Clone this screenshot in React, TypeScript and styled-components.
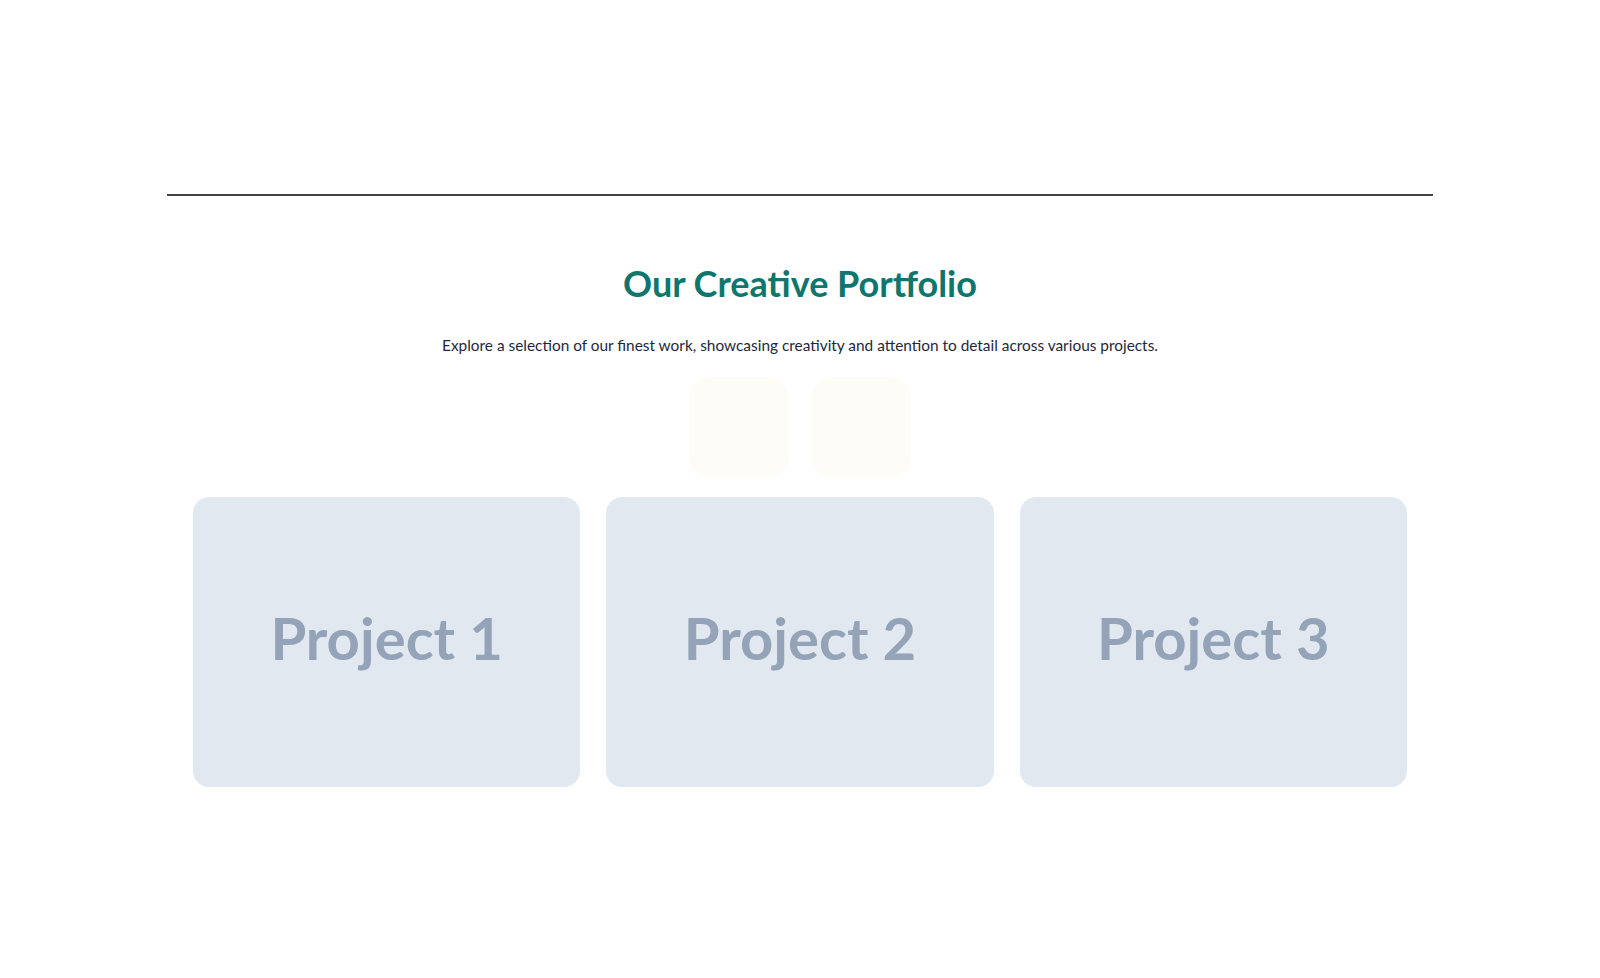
import React from "react";
import styled, { createGlobalStyle } from "styled-components";

const GlobalStyle = createGlobalStyle`
  html, body {
    margin: 0;
    padding: 0;
    background: #ffffff;
  }
  body {
    font-family: "Lato", "Noto Sans", sans-serif;
  }
  * { box-sizing: border-box; }
`;

const Page = styled.div`
  width: 1266px;
  margin: 0 auto;
  display: flex;
  flex-direction: column;
  min-height: 978px;
`;

const TopBar = styled.header`
  height: 194px;
`;

const Divider = styled.hr`
  margin: 0;
  border: none;
  height: 2px;
  background: #434343;
`;

const Section = styled.section`
  display: flex;
  flex-direction: column;
  align-items: center;
  padding: 66px 26px 0;
`;

const Title = styled.h2`
  margin: 0;
  font-family: "Lato", "Noto Sans", sans-serif;
  font-weight: 700;
  font-size: 36px;
  line-height: 43px;
  color: #0f766e;
`;

const Subtitle = styled.p`
  margin: 28px 0 0;
  font-family: "Lato", "Noto Sans", sans-serif;
  font-size: 15.4px;
  line-height: 24px;
  color: #1e293b;
`;

const Tiles = styled.div`
  display: flex;
  gap: 22px;
  margin-top: 20px;
`;

const Tile = styled.div`
  width: 100px;
  height: 101px;
  border-radius: 22px;
  background: #fdfcf6;
`;

const Grid = styled.div`
  display: grid;
  grid-template-columns: repeat(3, 1fr);
  gap: 26px;
  width: 100%;
  margin-top: 19px;
`;

const Card = styled.div`
  height: 290px;
  padding-bottom: 9px;
  border-radius: 16px;
  background: #e2e8f0;
  display: flex;
  align-items: center;
  justify-content: center;
`;

const CardLabel = styled.span`
  font-family: "Lato", sans-serif;
  font-weight: 700;
  font-size: 58px;
  color: #94a3b8;
  line-height: 1;
`;

const projects = ["Project 1", "Project 2", "Project 3"];

export default function App() {
  return (
    <>
      <GlobalStyle />
      <Page>
        <TopBar />
        <Divider />
        <Section>
          <Title>Our Creative Portfolio</Title>
          <Subtitle>
            Explore a selection of our finest work, showcasing creativity and attention to detail across various projects.
          </Subtitle>
          <Tiles>
            <Tile />
            <Tile />
          </Tiles>
          <Grid>
            {projects.map((p) => (
              <Card key={p}>
                <CardLabel>{p}</CardLabel>
              </Card>
            ))}
          </Grid>
        </Section>
      </Page>
    </>
  );
}
